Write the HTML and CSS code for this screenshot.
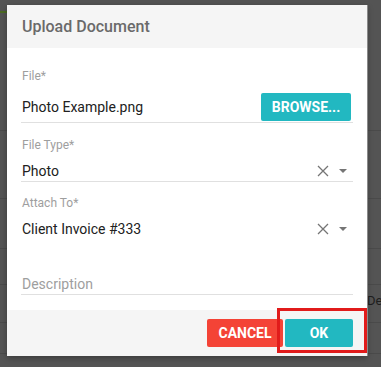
FILE: index.html
```html
<!DOCTYPE html>
<html lang="en">

<head>
    <meta charset="UTF-8">
    <meta name="viewport" content="width=device-width, initial-scale=1.0">
    <title>Upload Document</title>
    <link rel="stylesheet" href="styles.css">
</head>

<body>
    <!-- Page behind the overlay -->
    <div class="page">
        <div class="page-bar"></div>
        <div class="page-row r1"></div>
        <div class="page-row r2"></div>
        <div class="page-row r3"></div>
        <div class="page-row r4"></div>
        <div class="page-row r5"><span class="page-text">Des</span></div>
        <div class="page-row r6"></div>
    </div>

    <!-- Dialog -->
    <div class="dialog">
        <div class="dialog-header">Upload Document</div>

        <div class="dialog-body">
            <div class="field field-file">
                <label>File*</label>
                <div class="field-row">
                    <span class="value">Photo Example.png</span>
                    <button class="btn btn-teal btn-browse">Browse...</button>
                </div>
            </div>

            <div class="field field-type">
                <label>File Type*</label>
                <div class="field-row">
                    <span class="value">Photo</span>
                    <span class="clear">
                        <svg width="12" height="12" viewBox="0 0 12 12">
                            <path d="M1 1 L11 11 M11 1 L1 11" stroke="#757575" stroke-width="1.3" fill="none" />
                        </svg>
                    </span>
                    <span class="caret"></span>
                </div>
            </div>

            <div class="field field-attach">
                <label>Attach To*</label>
                <div class="field-row no-line">
                    <span class="value">Client Invoice #333</span>
                    <span class="clear">
                        <svg width="12" height="12" viewBox="0 0 12 12">
                            <path d="M1 1 L11 11 M11 1 L1 11" stroke="#757575" stroke-width="1.3" fill="none" />
                        </svg>
                    </span>
                    <span class="caret"></span>
                </div>
            </div>

            <div class="field field-desc">
                <div class="field-row">
                    <span class="placeholder">Description</span>
                </div>
            </div>
        </div>

        <div class="dialog-footer">
            <button class="btn btn-red btn-cancel">Cancel</button>
            <button class="btn btn-teal btn-ok">OK</button>
            <div class="highlight"></div>
        </div>
    </div>
</body>

</html>
```

FILE: styles.css
```css
body {
    margin: 0;
    font-family: Roboto, "Liberation Sans", Arial, sans-serif;
    background-color: #545454;
    overflow: hidden;
}

/* Page behind the overlay */
.page {
    width: 381px;
    height: 367px;
}

.page-bar {
    height: 2px;
    width: 8px;
    margin-top: 11px;
    background: #4c6b24;
}

.page-row {
    border-bottom: 1px solid #4a4a4a;
}

.r1 { height: 117px; }
.r2 { height: 67px; }
.r3 { height: 49px; }
.r4 { height: 35px; }
.r5 { height: 37px; }
.r6 { height: 30px; }

.page-text {
    display: block;
    padding-left: 367px;
    padding-top: 8px;
    font-size: 13px;
    color: #1e1e1e;
    white-space: nowrap;
}

/* Dialog */
.dialog {
    position: absolute;
    left: 7px;
    top: 5px;
    width: 360px;
    background: white;
    box-shadow: 1px 0 0 #8a8a8a, 0 2px 6px rgba(0, 0, 0, 0.3);
}

.dialog-header {
    height: 43px;
    line-height: 43px;
    padding-left: 15px;
    background: #f5f5f5;
    color: #6a6a6a;
    font-size: 16px;
    font-weight: 500;
}

.dialog-body {
    padding: 0 14px 15px 14px;
}

.field label {
    display: block;
    height: 16px;
    line-height: 16px;
    padding-left: 1px;
    font-size: 12px;
    color: #9e9e9e;
}

.field-row {
    display: flex;
    align-items: center;
    border-bottom: 1px solid #e0e0e0;
    font-size: 14px;
    color: #212121;
}

.field-row.no-line {
    border-bottom-color: transparent;
}

.value,
.placeholder {
    flex: 1;
    padding-left: 1px;
}

.field-file {
    padding-top: 20px;
}

.field-file .field-row {
    margin-top: 9px;
    height: 29px;
    align-items: flex-start;
    line-height: 28px;
}

.field-type {
    padding-top: 14px;
}

.field-type .field-row,
.field-attach .field-row {
    margin-top: 7px;
    height: 21px;
}

.field-attach {
    padding-top: 13px;
}

.field-desc {
    padding-top: 33px;
}

.field-desc .field-row {
    height: 21px;
}

.placeholder {
    color: #9e9e9e;
}

.clear {
    display: flex;
    width: 12px;
    height: 12px;
    margin-right: 10px;
}

.caret {
    width: 0;
    height: 0;
    border-left: 4px solid transparent;
    border-right: 4px solid transparent;
    border-top: 4px solid #757575;
    margin-right: 6px;
}

/* Buttons */
.btn {
    height: 28px;
    border: none;
    border-radius: 2px;
    color: white;
    font-family: Roboto, "Liberation Sans", Arial, sans-serif;
    font-size: 14px;
    font-weight: bold;
    text-transform: uppercase;
    cursor: pointer;
    padding: 0;
}

.btn-teal {
    background-color: #22b8c1;
}

.btn-red {
    background-color: #f44336;
}

.btn-browse {
    width: 90px;
    margin-right: 2px;
}

.dialog-footer {
    position: relative;
    height: 46px;
    background: #f5f5f5;
    display: flex;
    justify-content: flex-end;
    align-items: center;
    gap: 2px;
    padding-right: 14px;
}

.btn-cancel {
    width: 76px;
}

.btn-ok {
    width: 68px;
}

/* Annotation box around OK */
.highlight {
    position: absolute;
    left: 270px;
    top: -2px;
    width: 84px;
    height: 39px;
    border: 3px solid #e11b1b;
}
```
